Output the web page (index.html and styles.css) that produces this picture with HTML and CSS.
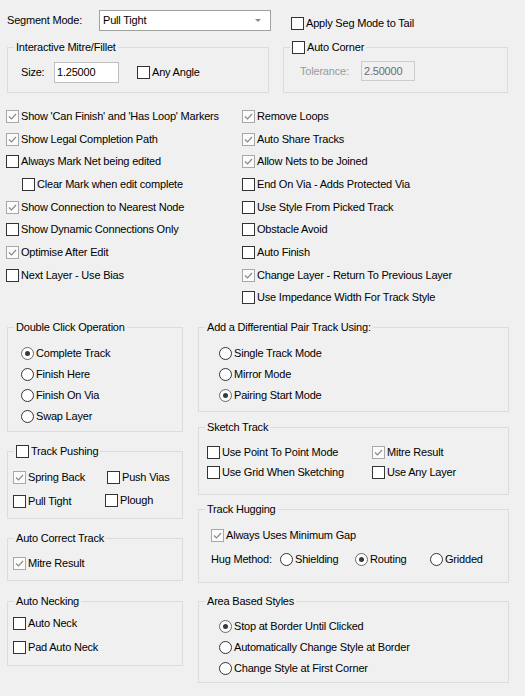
FILE: index.html
```html
<!DOCTYPE html>
<html lang="en">
<head>
<meta charset="utf-8">
<title>Track Options</title>
<link rel="stylesheet" href="styles.css">
</head>
<body>
<div class="dlg">
  <div class="top-row">
    <span class="seg-lbl">Segment Mode:</span>
    <div class="combo"><span class="combo-text">Pull Tight</span><span class="arrow"></span></div>
    <div class="chk apply"><span class="cb"></span><span>Apply Seg Mode to Tail</span></div>
  </div>

  <div class="upper">
    <div class="group g-mitre">
      <div class="gtitle">Interactive Mitre/Fillet</div>
      <div class="mitre-row">
        <span class="size-lbl">Size:</span>
        <span class="input">1.25000</span>
        <div class="chk any-angle"><span class="cb"></span><span>Any Angle</span></div>
      </div>
    </div>
    <div class="group g-corner">
      <div class="gtitle"><div class="chk"><span class="cb"></span><span>Auto Corner</span></div></div>
      <div class="tol-row"><span class="tol-lbl">Tolerance:</span><span class="input disabled">2.50000</span></div>
    </div>
  </div>

  <div class="checks">
    <div class="col col-left">
      <div class="chk"><span class="cb on"><svg viewBox="0 0 11 11"><polyline points="2,5.5 4.5,8 9,3"/></svg></span><span>Show 'Can Finish' and 'Has Loop' Markers</span></div>
      <div class="chk"><span class="cb on"><svg viewBox="0 0 11 11"><polyline points="2,5.5 4.5,8 9,3"/></svg></span><span>Show Legal Completion Path</span></div>
      <div class="chk"><span class="cb"></span><span>Always Mark Net being edited</span></div>
      <div class="chk indent"><span class="cb"></span><span>Clear Mark when edit complete</span></div>
      <div class="chk"><span class="cb on"><svg viewBox="0 0 11 11"><polyline points="2,5.5 4.5,8 9,3"/></svg></span><span>Show Connection to Nearest Node</span></div>
      <div class="chk"><span class="cb"></span><span>Show Dynamic Connections Only</span></div>
      <div class="chk"><span class="cb on"><svg viewBox="0 0 11 11"><polyline points="2,5.5 4.5,8 9,3"/></svg></span><span>Optimise After Edit</span></div>
      <div class="chk"><span class="cb"></span><span>Next Layer - Use Bias</span></div>
    </div>
    <div class="col col-right">
      <div class="chk"><span class="cb on"><svg viewBox="0 0 11 11"><polyline points="2,5.5 4.5,8 9,3"/></svg></span><span>Remove Loops</span></div>
      <div class="chk"><span class="cb on"><svg viewBox="0 0 11 11"><polyline points="2,5.5 4.5,8 9,3"/></svg></span><span>Auto Share Tracks</span></div>
      <div class="chk"><span class="cb on"><svg viewBox="0 0 11 11"><polyline points="2,5.5 4.5,8 9,3"/></svg></span><span>Allow Nets to be Joined</span></div>
      <div class="chk"><span class="cb"></span><span>End On Via - Adds Protected Via</span></div>
      <div class="chk"><span class="cb"></span><span>Use Style From Picked Track</span></div>
      <div class="chk"><span class="cb"></span><span>Obstacle Avoid</span></div>
      <div class="chk"><span class="cb"></span><span>Auto Finish</span></div>
      <div class="chk"><span class="cb on"><svg viewBox="0 0 11 11"><polyline points="2,5.5 4.5,8 9,3"/></svg></span><span>Change Layer - Return To Previous Layer</span></div>
      <div class="chk"><span class="cb"></span><span>Use Impedance Width For Track Style</span></div>
    </div>
  </div>

  <div class="lower">
    <div class="lcol">
      <div class="group g-dbl">
        <div class="gtitle">Double Click Operation</div>
        <div class="radios">
          <div class="rad"><span class="rb on"></span><span>Complete Track</span></div>
          <div class="rad"><span class="rb"></span><span>Finish Here</span></div>
          <div class="rad"><span class="rb"></span><span>Finish On Via</span></div>
          <div class="rad"><span class="rb"></span><span>Swap Layer</span></div>
        </div>
      </div>
      <div class="group g-push">
        <div class="gtitle"><div class="chk"><span class="cb"></span><span>Track Pushing</span></div></div>
        <div class="push-grid">
          <div class="chk"><span class="cb on"><svg viewBox="0 0 11 11"><polyline points="2,5.5 4.5,8 9,3"/></svg></span><span>Spring Back</span></div>
          <div class="chk"><span class="cb"></span><span>Push Vias</span></div>
          <div class="chk"><span class="cb"></span><span>Pull Tight</span></div>
          <div class="chk plough"><span class="cb"></span><span>Plough</span></div>
        </div>
      </div>
      <div class="group g-acorr">
        <div class="gtitle">Auto Correct Track</div>
        <div class="acorr-list">
          <div class="chk"><span class="cb on"><svg viewBox="0 0 11 11"><polyline points="2,5.5 4.5,8 9,3"/></svg></span><span>Mitre Result</span></div>
        </div>
      </div>
      <div class="group g-neck">
        <div class="gtitle">Auto Necking</div>
        <div class="neck-list">
          <div class="chk"><span class="cb"></span><span>Auto Neck</span></div>
          <div class="chk"><span class="cb"></span><span>Pad Auto Neck</span></div>
        </div>
      </div>
    </div>

    <div class="rcol">
      <div class="group g-diff">
        <div class="gtitle">Add a Differential Pair Track Using:</div>
        <div class="radios">
          <div class="rad"><span class="rb"></span><span>Single Track Mode</span></div>
          <div class="rad"><span class="rb"></span><span>Mirror Mode</span></div>
          <div class="rad"><span class="rb on"></span><span>Pairing Start Mode</span></div>
        </div>
      </div>
      <div class="group g-sketch">
        <div class="gtitle">Sketch Track</div>
        <div class="sketch-grid">
          <div class="chk"><span class="cb"></span><span>Use Point To Point Mode</span></div>
          <div class="chk"><span class="cb on"><svg viewBox="0 0 11 11"><polyline points="2,5.5 4.5,8 9,3"/></svg></span><span>Mitre Result</span></div>
          <div class="chk"><span class="cb"></span><span>Use Grid When Sketching</span></div>
          <div class="chk"><span class="cb"></span><span>Use Any Layer</span></div>
        </div>
      </div>
      <div class="group g-hug">
        <div class="gtitle">Track Hugging</div>
        <div class="hug-body">
          <div class="chk"><span class="cb on"><svg viewBox="0 0 11 11"><polyline points="2,5.5 4.5,8 9,3"/></svg></span><span>Always Uses Minimum Gap</span></div>
          <div class="hug-row">
            <span class="hug-lbl">Hug Method:</span>
            <div class="rad hug-opt"><span class="rb"></span><span>Shielding</span></div>
            <div class="rad hug-opt"><span class="rb on"></span><span>Routing</span></div>
            <div class="rad hug-opt"><span class="rb"></span><span>Gridded</span></div>
          </div>
        </div>
      </div>
      <div class="group g-area">
        <div class="gtitle">Area Based Styles</div>
        <div class="radios">
          <div class="rad"><span class="rb on"></span><span>Stop at Border Until Clicked</span></div>
          <div class="rad"><span class="rb"></span><span>Automatically Change Style at Border</span></div>
          <div class="rad"><span class="rb"></span><span>Change Style at First Corner</span></div>
        </div>
      </div>
    </div>
  </div>
</div>
</body>
</html>
```

FILE: styles.css
```css
html, body {
  margin: 0;
  padding: 0;
  background: #f0f0f0;
}
body {
  font-family: "Liberation Sans", Arial, sans-serif;
  font-size: 11px;
  letter-spacing: -0.2px;
  line-height: 13px;
  color: #000;
  width: 525px;
  height: 696px;
  overflow: hidden;
}
.dlg {
  display: flex;
  flex-direction: column;
}

/* generic controls */
.chk, .rad {
  display: flex;
  align-items: center;
  gap: 2px;
  white-space: nowrap;
}
.cb {
  width: 13px;
  height: 13px;
  box-sizing: border-box;
  border: 1px solid #333;
  background: #fff;
  flex: none;
  display: flex;
}
.cb.on {
  border-color: #a8a8a8;
  background: #fbfbfb;
}
.cb svg {
  width: 11px;
  height: 11px;
}
.cb polyline {
  fill: none;
  stroke: #8a8a8a;
  stroke-width: 1.2;
}
.rb {
  width: 13px;
  height: 13px;
  box-sizing: border-box;
  border: 1px solid #333;
  border-radius: 50%;
  background: #fff;
  flex: none;
  display: flex;
  align-items: center;
  justify-content: center;
}
.rb.on {
  border-color: #6a6a6a;
}
.rb.on::after {
  content: "";
  width: 5px;
  height: 5px;
  border-radius: 50%;
  background: #3a3a3a;
}
.input {
  box-sizing: border-box;
  height: 21px;
  border: 1px solid #bfbfbf;
  background: #fff;
  padding-left: 2px;
  display: flex;
  align-items: center;
}
.input.disabled {
  height: 20px;
  background: #f0f0f0;
  border-color: #cccccc;
  color: #6d6d6d;
}

/* group boxes */
.group {
  box-sizing: border-box;
  border: 1px solid #dcdcdc;
}
.gtitle {
  display: flex;
  width: max-content;
  height: 13px;
  margin: -7px 0 0 6px;
  padding: 0 2px;
  background: #f0f0f0;
}

/* top row */
.top-row {
  display: flex;
  align-items: flex-start;
  margin-top: 10px;
  height: 21px;
  padding-left: 7px;
}
.seg-lbl {
  width: 92px;
  line-height: 21px;
}
.combo {
  box-sizing: border-box;
  width: 172px;
  height: 21px;
  border: 1px solid #a0a0a0;
  background: #fff;
  display: flex;
  align-items: center;
  justify-content: space-between;
  padding: 0 9px 0 3px;
}
.arrow {
  width: 0;
  height: 0;
  border-left: 3px solid transparent;
  border-right: 3px solid transparent;
  border-top: 3px solid #8a8a8a;
}
.apply {
  margin: 7px 0 0 20px;
}

/* upper groups */
.upper {
  display: flex;
  margin-top: 16px;
  padding-left: 7px;
}
.g-mitre {
  width: 262px;
  height: 46px;
}
.g-corner {
  width: 225px;
  height: 46px;
  margin-left: 14px;
}
.mitre-row {
  display: flex;
  align-items: center;
  margin-top: 8px;
  padding-left: 13px;
  height: 21px;
}
.size-lbl {
  width: 33px;
}
.mitre-row .input {
  width: 65px;
}
.any-angle {
  margin-left: 18px;
}
.tol-row {
  display: flex;
  align-items: center;
  margin-top: 7px;
  padding-left: 16px;
  height: 20px;
}
.tol-lbl {
  width: 61px;
  color: #9a9a9a;
}
.tol-row .input {
  width: 54px;
}

/* checkbox columns */
.checks {
  display: flex;
  margin-top: 12px;
  height: 222px;
  padding-left: 6px;
}
.col {
  display: grid;
  grid-auto-rows: 22.7px;
  align-content: start;
}
.col-left {
  width: 236px;
}
.indent {
  margin-left: 16px;
}

/* lower groups */
.lower {
  display: flex;
  padding-left: 7px;
}
.lcol {
  width: 176px;
  display: flex;
  flex-direction: column;
}
.rcol {
  width: 311px;
  margin-left: 15px;
  display: flex;
  flex-direction: column;
}
.radios {
  display: grid;
  grid-auto-rows: 21px;
  margin-top: 9px;
}
.g-dbl {
  height: 105px;
}
.g-dbl .radios {
  padding-left: 13px;
}
.g-push {
  height: 68px;
  margin-top: 19px;
}
.push-grid {
  display: grid;
  grid-template-columns: 94px auto;
  grid-auto-rows: 24px;
  margin-top: 7px;
  padding-left: 5px;
}
.plough {
  align-self: start;
  margin: 5px 0 0 -2px;
}
.g-acorr {
  height: 43px;
  margin-top: 19px;
}
.acorr-list {
  display: grid;
  grid-auto-rows: 22px;
  margin-top: 7px;
  padding-left: 5px;
}
.g-neck {
  height: 65px;
  margin-top: 20px;
}
.neck-list {
  display: grid;
  grid-auto-rows: 24px;
  margin-top: 3px;
  padding-left: 5px;
}
.g-diff {
  height: 85px;
}
.g-diff .radios {
  padding-left: 20px;
}
.g-sketch {
  height: 68px;
  margin-top: 15px;
}
.sketch-grid {
  display: grid;
  grid-template-columns: 165px auto;
  grid-auto-rows: 20px;
  margin-top: 8px;
  padding-left: 8px;
}
.g-hug {
  height: 74px;
  margin-top: 14px;
}
.hug-body {
  display: grid;
  grid-auto-rows: 24px;
  margin-top: 7px;
  padding-left: 12px;
}
.hug-row {
  display: flex;
  align-items: center;
}
.hug-lbl {
  width: 69px;
}
.hug-opt {
  width: 75px;
}
.g-area {
  height: 82px;
  margin-top: 18px;
}
.g-area .radios {
  margin-top: 8px;
  padding-left: 20px;
}
```
